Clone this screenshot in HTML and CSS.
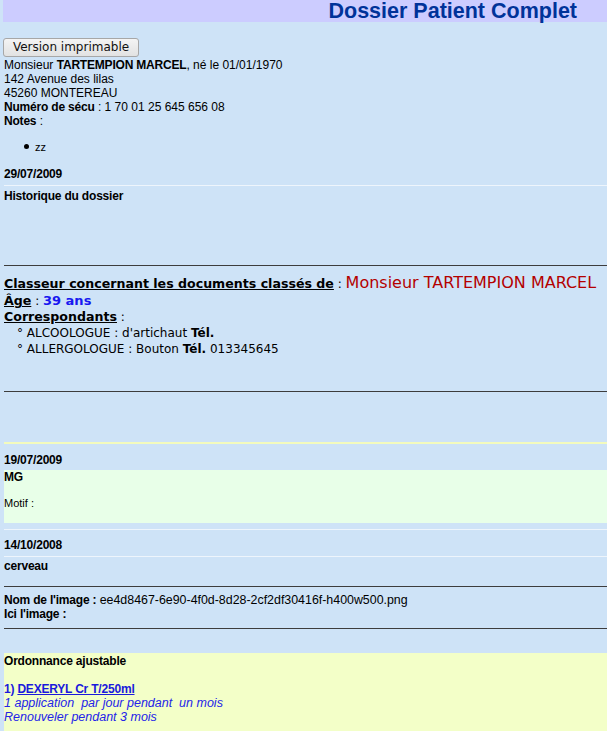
FILE: index.html
```html
<!DOCTYPE html>
<html lang="fr">
<head>
<meta charset="utf-8">
<title>Dossier Patient Complet</title>
<link rel="stylesheet" href="styles.css">
</head>
<body>
<header class="header"><h1 class="title">Dossier Patient Complet</h1></header>
<main class="page">
  <button class="print-btn" type="button">Version imprimable</button>
  <div class="identity">
    <div>Monsieur <b class="name">TARTEMPION MARCEL</b>, né le 01/01/1970</div>
    <div>142 Avenue des lilas</div>
    <div>45260 MONTEREAU</div>
    <div><b>Numéro de sécu</b> : 1 70 01 25 645 656 08</div>
    <div><b>Notes</b> :</div>
  </div>
  <ul class="notes"><li class="note">zz</li></ul>

  <section class="entry entry-history">
    <div class="date date-ruled">29/07/2009</div>
    <div class="entry-title">Historique du dossier</div>
    <div class="history-space"></div>
    <hr class="rule">
    <div class="classeur">
      <div class="cl-first"><u class="lbl">Classeur concernant les documents classés de</u> : <span class="patient-red">Monsieur TARTEMPION MARCEL</span></div>
      <div class="cl-line"><u class="lbl">Âge</u> : <b class="age">39 ans</b></div>
      <div class="cl-line"><u class="lbl">Correspondants</u> :</div>
      <div class="cl-line corr">° ALCOOLOGUE : d'artichaut <b>Tél.</b></div>
      <div class="cl-line corr">° ALLERGOLOGUE : Bouton <b>Tél.</b> 013345645</div>
    </div>
    <hr class="rule rule-after-classeur">
    <div class="yellow-rule"></div>
  </section>

  <section class="entry">
    <div class="date date-mg">19/07/2009</div>
    <div class="box-green">
      <div class="entry-title">MG</div>
      <div class="motif">Motif :</div>
    </div>
  </section>

  <div class="light-rule light-rule-top"></div>
  <section class="entry">
    <div class="date date-ruled date-img">14/10/2008</div>
    <div class="entry-title title-cerveau">cerveau</div>
    <hr class="rule rule-img-top">
    <div class="img-info">
      <div><b>Nom de l'image :</b> <span class="filename">ee4d8467-6e90-4f0d-8d28-2cf2df30416f-h400w500.png</span></div>
      <div><b>Ici l'image :</b></div>
    </div>
    <hr class="rule rule-img-bottom">
  </section>

  <section class="box-yellow">
    <div class="entry-title">Ordonnance ajustable</div>
    <div class="blank"></div>
    <div class="drug"><b>1) <a class="drug-link" href="#">DEXERYL Cr T/250ml</a></b></div>
    <div class="posology">1 application&nbsp; par jour pendant&nbsp; un mois</div>
    <div class="posology">Renouveler pendant 3 mois</div>
  </section>
</main>
</body>
</html>
```

FILE: styles.css
```css
html, body {
  margin: 0;
  padding: 0;
  background: #cee3f7;
  overflow: hidden;
}

body {
  padding-left: 3px;
  font-family: "Liberation Sans", Arial, sans-serif;
  font-size: 12px;
  line-height: 14px;
  color: #000;
}

b {
  letter-spacing: -0.2px;
}

.header {
  background: #ccccff;
  height: 22px;
}

.title {
  margin: 0;
  padding-right: 30px;
  text-align: right;
  font-size: 21.5px;
  line-height: 22px;
  font-weight: bold;
  color: #003399;
}

.page {
  padding-left: 1px;
}

.print-btn {
  display: block;
  margin: 16px 0 0 -1px;
  height: 19px;
  width: 136px;
  padding: 0;
  font-family: "DejaVu Sans", sans-serif;
  font-size: 12px;
  line-height: 17px;
  color: #111;
  background: linear-gradient(#f4f4f4, #e2e2e2);
  border: 1px solid #a7a7a7;
  border-radius: 3px;
}

.identity {
  margin-top: 1px;
}

.notes {
  margin: 12px 0 13px;
  padding-left: 31px;
  list-style: none;
  font-size: 11px;
}

.note::before {
  content: "";
  display: inline-block;
  width: 5px;
  height: 5px;
  margin-left: -11px;
  margin-right: 6px;
  border-radius: 50%;
  background: #000;
  vertical-align: 2px;
}

.date {
  font-weight: bold;
  letter-spacing: -0.2px;
}

.date-ruled {
  padding-bottom: 4px;
  border-bottom: 1px solid #eef5fc;
}

.entry-title {
  font-weight: bold;
  letter-spacing: -0.2px;
}

.entry-history .entry-title {
  margin-top: 3px;
}

.history-space {
  height: 62px;
}

.rule {
  margin: 0;
  border: 0;
  height: 1px;
  background: #3d3d3d;
}

.classeur {
  font-family: "DejaVu Sans", sans-serif;
  font-size: 12px;
  padding-top: 8px;
}

.classeur b {
  letter-spacing: 0;
}

.cl-first {
  line-height: 18px;
  white-space: nowrap;
}

.cl-line {
  line-height: 16px;
}

.lbl {
  font-weight: bold;
  font-size: 12.6px;
}

.patient-red {
  font-size: 16px;
  color: #b40000;
}

.age {
  font-size: 13px;
  color: #1818f0;
}

.corr {
  padding-left: 13px;
}

.rule-after-classeur {
  margin-top: 34px;
}

.yellow-rule {
  margin-top: 50px;
  height: 2px;
  background: #f3fbbd;
}

.date-mg {
  margin-top: 9px;
}

.box-green {
  margin-top: 3px;
  height: 53px;
  background: #e8ffe8;
}

.motif {
  margin-top: 12px;
  font-size: 11px;
}

.light-rule {
  height: 1px;
  background: #eef5fc;
}

.light-rule-top {
  margin-top: 6px;
}

.date-img {
  margin-top: 8px;
}

.title-cerveau {
  margin-top: 2px;
}

.rule-img-top {
  margin-top: 13px;
}

.img-info {
  margin-top: 6px;
}

.filename {
  font-size: 12.4px;
}

.rule-img-bottom {
  margin-top: 7px;
}

.box-yellow {
  margin-top: 24px;
  background: #f3ffc8;
  padding-top: 1px;
  padding-bottom: 40px;
}

.blank {
  height: 14px;
}

.drug {
  color: #1a1adc;
}

.drug-link {
  color: #1a1adc;
  text-decoration: underline;
}

.posology {
  font-style: italic;
  font-size: 12.5px;
  color: #2424e8;
}
```
